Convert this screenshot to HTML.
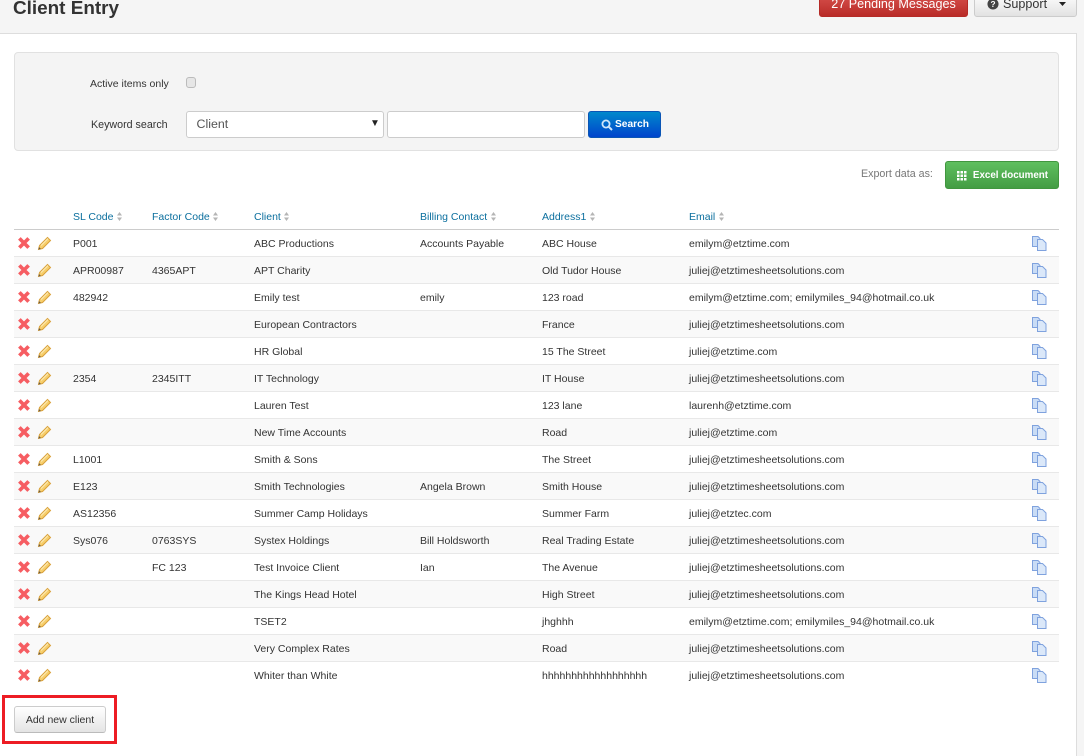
<!DOCTYPE html>
<html><head><meta charset="utf-8"><title>Client Entry</title>
<style>
html,body{margin:0;padding:0;width:1084px;height:755px;overflow:hidden;background:#f5f5f5;font-family:"Liberation Sans",Arial,sans-serif;color:#333}
.abs{position:absolute}
#main{position:absolute;left:0;top:33px;width:1076px;height:722px;background:#fff;border-top:1px solid #ddd;border-right:1px solid #ddd}
h1{position:absolute;left:13px;top:-4px;margin:0;font-size:18.9px;line-height:26px;font-weight:bold;color:#333}
.btn{position:absolute;box-sizing:border-box;border-radius:3px;text-align:center}
#pending{left:819px;top:-8px;width:149px;height:25px;background:linear-gradient(#d9534f,#b92c28);border:1px solid #b52b27;color:#fff;font-size:12.6px;line-height:23px}
#support{left:974px;top:-8px;width:103px;height:25px;background:linear-gradient(#fff,#e2e2e2);border:1px solid #ccc;color:#333;font-size:12.6px;line-height:23px;text-align:left;padding-left:28px}
#well{position:absolute;left:14px;top:52px;box-sizing:border-box;width:1045px;height:99px;background:#f4f4f4;border:1px solid #e1e1e1;border-radius:4px}
.lbl{position:absolute;font-size:10.5px;line-height:14px;color:#333;white-space:nowrap}
#sel{position:absolute;left:186px;top:111px;box-sizing:border-box;width:198px;height:27px;background:#fff;border:1px solid #ccc;border-radius:3px;font-size:12.4px;line-height:24px;color:#555;padding-left:9.5px}
#sel i{position:absolute;left:183px;top:0;font-style:normal;font-size:10px;color:#222}
#inp{position:absolute;left:387px;top:111px;box-sizing:border-box;width:198px;height:27px;background:#fff;border:1px solid #ccc;border-radius:3px}
#search{left:588px;top:111px;width:73px;height:27px;background:linear-gradient(#0088cc,#0044cc);border:1px solid #0a55b5;color:#fff;font-size:10.2px;font-weight:bold;line-height:26px;padding-left:15px}
#cb{position:absolute;left:186px;top:77px;box-sizing:border-box;width:10px;height:11px;border:1px solid #bbb;border-radius:3px;background:#e6e6e6}
#excel{left:945px;top:161px;width:114px;height:28px;background:linear-gradient(#5fbf5f,#449d44);border:1px solid #41963f;color:#fff;font-size:9.8px;font-weight:bold;line-height:27px;padding-left:17px}
table{position:absolute;left:14px;top:203px;width:1045px;border-collapse:collapse;table-layout:fixed;font-size:10.5px;color:#333}
th{height:24px;padding:2px 0 0;text-align:left;font-weight:normal;color:#0b6f9e;border-bottom:1px solid #ccc;white-space:nowrap;vertical-align:middle}
td{height:24px;padding:2px 0 0;border-bottom:1px solid #e8e8e8;white-space:nowrap;vertical-align:middle}
tr.o td{background:#f9f9f9}
th svg{margin-left:3.5px;vertical-align:-1px}
.ic{display:block;float:left;position:relative;top:-1px}
#add{left:14px;top:706px;width:92px;height:27px;background:linear-gradient(#fff,#e4e4e4);border:1px solid #ccc;border-bottom-color:#bbb;color:#333;font-size:10.5px;line-height:26px}
#red{position:absolute;left:2px;top:695px;box-sizing:border-box;width:115px;height:49px;border:3px solid #ed1c24}
</style></head><body>
<svg width="0" height="0" style="position:absolute"><defs>
<symbol id="x" viewBox="0 0 13 13"><path d="M2.2 2.2L10.8 10.8M10.8 2.2L2.2 10.8" stroke="#f65d62" stroke-width="3.4"/></symbol>
<symbol id="p" viewBox="0 0 15 15"><path d="M1.5 13.5L2.5 9.5L10.5 1.5L13.5 4.5L5.5 12.5Z" fill="#f7cf6d" stroke="#d9a13a" stroke-width="1"/><path d="M1.5 13.5L2 11L4 13Z" fill="#6a5a40"/><path d="M4 9.5L11 2.5" stroke="#fdeebc" stroke-width="1"/></symbol>
<symbol id="c" viewBox="0 0 15 15"><path d="M.5.5H6L8 2.5V10.5H.5Z" fill="#c9dcf5" stroke="#7fa2de"/><path d="M5.5 3.5H10.5L14 7V14.5H5.5Z" fill="#dbe8f9" stroke="#7fa2de"/></symbol>
<symbol id="s" viewBox="0 0 5 9"><path d="M2.5 0L5 3.5H0ZM0 5.5H5L2.5 9Z" fill="#b5b5b5"/></symbol>
</defs></svg>
<h1>Client Entry</h1>
<div class="btn" id="pending">27 Pending Messages</div>
<div class="btn" id="support">Support<svg class="abs" style="left:12px;top:5px" width="12" height="12" viewBox="0 0 13 13"><circle cx="6.5" cy="6.5" r="6" fill="#444"/><text x="6.5" y="10" font-size="9" font-weight="bold" text-anchor="middle" fill="#fff" font-family="Liberation Sans">?</text></svg><svg class="abs" style="left:84px;top:9px" width="8" height="4"><path d="M0 0H7L3.5 4Z" fill="#222"/></svg></div>
<div id="main"></div>
<div id="well"></div>
<div class="lbl" style="left:90px;top:77px">Active items only</div>
<div id="cb"></div>
<div class="lbl" style="left:91px;top:118px;font-size:10.7px">Keyword search</div>
<div id="sel">Client<i>&#9660;</i></div>
<div id="inp"></div>
<div class="btn" id="search"><svg class="abs" style="left:12px;top:7px" width="12" height="12" viewBox="0 0 12 12"><circle cx="5" cy="5" r="3.6" fill="none" stroke="#cfe6fa" stroke-width="1.8"/><path d="M7.8 7.8L11 11" stroke="#cfe6fa" stroke-width="2"/></svg>Search</div>
<div class="lbl" style="left:861px;top:167px;color:#777;font-size:10.7px">Export data as:</div>
<div class="btn" id="excel"><svg class="abs" style="left:11px;top:9px" width="10" height="10"><path d="M0 0h2.5v2.5H0zM3.5 0h2.5v2.5H3.5zM7 0h2.5v2.5H7zM0 3.5h2.5V6H0zM3.5 3.5h2.5V6H3.5zM7 3.5h2.5V6H7zM0 7h2.5v2.5H0zM3.5 7h2.5v2.5H3.5zM7 7h2.5v2.5H7z" fill="#fff"/></svg>Excel document</div>
<table>
<colgroup><col style="width:59px"><col style="width:79px"><col style="width:102px"><col style="width:166px"><col style="width:122px"><col style="width:147px"><col style="width:343px"><col style="width:27px"></colgroup>
<tr><th></th><th>SL Code<svg width="5" height="9"><use href="#s"/></svg></th><th>Factor Code<svg width="5" height="9"><use href="#s"/></svg></th><th>Client<svg width="5" height="9"><use href="#s"/></svg></th><th>Billing Contact<svg width="5" height="9"><use href="#s"/></svg></th><th>Address1<svg width="5" height="9"><use href="#s"/></svg></th><th>Email<svg width="5" height="9"><use href="#s"/></svg></th><th></th></tr>
<tr><td><svg class="ic" style="margin-left:3px" width="14" height="14"><use href="#x"/></svg><svg class="ic" style="margin-left:6px" width="15" height="15"><use href="#p"/></svg></td><td>P001</td><td></td><td>ABC Productions</td><td>Accounts Payable</td><td>ABC House</td><td>emilym@etztime.com</td><td><svg class="ic" width="15" height="15"><use href="#c"/></svg></td></tr>
<tr class="o"><td><svg class="ic" style="margin-left:3px" width="14" height="14"><use href="#x"/></svg><svg class="ic" style="margin-left:6px" width="15" height="15"><use href="#p"/></svg></td><td>APR00987</td><td>4365APT</td><td>APT Charity</td><td></td><td>Old Tudor House</td><td>juliej@etztimesheetsolutions.com</td><td><svg class="ic" width="15" height="15"><use href="#c"/></svg></td></tr>
<tr><td><svg class="ic" style="margin-left:3px" width="14" height="14"><use href="#x"/></svg><svg class="ic" style="margin-left:6px" width="15" height="15"><use href="#p"/></svg></td><td>482942</td><td></td><td>Emily test</td><td>emily</td><td>123 road</td><td>emilym@etztime.com; emilymiles_94@hotmail.co.uk</td><td><svg class="ic" width="15" height="15"><use href="#c"/></svg></td></tr>
<tr class="o"><td><svg class="ic" style="margin-left:3px" width="14" height="14"><use href="#x"/></svg><svg class="ic" style="margin-left:6px" width="15" height="15"><use href="#p"/></svg></td><td></td><td></td><td>European Contractors</td><td></td><td>France</td><td>juliej@etztimesheetsolutions.com</td><td><svg class="ic" width="15" height="15"><use href="#c"/></svg></td></tr>
<tr><td><svg class="ic" style="margin-left:3px" width="14" height="14"><use href="#x"/></svg><svg class="ic" style="margin-left:6px" width="15" height="15"><use href="#p"/></svg></td><td></td><td></td><td>HR Global</td><td></td><td>15 The Street</td><td>juliej@etztime.com</td><td><svg class="ic" width="15" height="15"><use href="#c"/></svg></td></tr>
<tr class="o"><td><svg class="ic" style="margin-left:3px" width="14" height="14"><use href="#x"/></svg><svg class="ic" style="margin-left:6px" width="15" height="15"><use href="#p"/></svg></td><td>2354</td><td>2345ITT</td><td>IT Technology</td><td></td><td>IT House</td><td>juliej@etztimesheetsolutions.com</td><td><svg class="ic" width="15" height="15"><use href="#c"/></svg></td></tr>
<tr><td><svg class="ic" style="margin-left:3px" width="14" height="14"><use href="#x"/></svg><svg class="ic" style="margin-left:6px" width="15" height="15"><use href="#p"/></svg></td><td></td><td></td><td>Lauren Test</td><td></td><td>123 lane</td><td>laurenh@etztime.com</td><td><svg class="ic" width="15" height="15"><use href="#c"/></svg></td></tr>
<tr class="o"><td><svg class="ic" style="margin-left:3px" width="14" height="14"><use href="#x"/></svg><svg class="ic" style="margin-left:6px" width="15" height="15"><use href="#p"/></svg></td><td></td><td></td><td>New Time Accounts</td><td></td><td>Road</td><td>juliej@etztime.com</td><td><svg class="ic" width="15" height="15"><use href="#c"/></svg></td></tr>
<tr><td><svg class="ic" style="margin-left:3px" width="14" height="14"><use href="#x"/></svg><svg class="ic" style="margin-left:6px" width="15" height="15"><use href="#p"/></svg></td><td>L1001</td><td></td><td>Smith &amp; Sons</td><td></td><td>The Street</td><td>juliej@etztimesheetsolutions.com</td><td><svg class="ic" width="15" height="15"><use href="#c"/></svg></td></tr>
<tr class="o"><td><svg class="ic" style="margin-left:3px" width="14" height="14"><use href="#x"/></svg><svg class="ic" style="margin-left:6px" width="15" height="15"><use href="#p"/></svg></td><td>E123</td><td></td><td>Smith Technologies</td><td>Angela Brown</td><td>Smith House</td><td>juliej@etztimesheetsolutions.com</td><td><svg class="ic" width="15" height="15"><use href="#c"/></svg></td></tr>
<tr><td><svg class="ic" style="margin-left:3px" width="14" height="14"><use href="#x"/></svg><svg class="ic" style="margin-left:6px" width="15" height="15"><use href="#p"/></svg></td><td>AS12356</td><td></td><td>Summer Camp Holidays</td><td></td><td>Summer Farm</td><td>juliej@etztec.com</td><td><svg class="ic" width="15" height="15"><use href="#c"/></svg></td></tr>
<tr class="o"><td><svg class="ic" style="margin-left:3px" width="14" height="14"><use href="#x"/></svg><svg class="ic" style="margin-left:6px" width="15" height="15"><use href="#p"/></svg></td><td>Sys076</td><td>0763SYS</td><td>Systex Holdings</td><td>Bill Holdsworth</td><td>Real Trading Estate</td><td>juliej@etztimesheetsolutions.com</td><td><svg class="ic" width="15" height="15"><use href="#c"/></svg></td></tr>
<tr><td><svg class="ic" style="margin-left:3px" width="14" height="14"><use href="#x"/></svg><svg class="ic" style="margin-left:6px" width="15" height="15"><use href="#p"/></svg></td><td></td><td>FC 123</td><td>Test Invoice Client</td><td>Ian</td><td>The Avenue</td><td>juliej@etztimesheetsolutions.com</td><td><svg class="ic" width="15" height="15"><use href="#c"/></svg></td></tr>
<tr class="o"><td><svg class="ic" style="margin-left:3px" width="14" height="14"><use href="#x"/></svg><svg class="ic" style="margin-left:6px" width="15" height="15"><use href="#p"/></svg></td><td></td><td></td><td>The Kings Head Hotel</td><td></td><td>High Street</td><td>juliej@etztimesheetsolutions.com</td><td><svg class="ic" width="15" height="15"><use href="#c"/></svg></td></tr>
<tr><td><svg class="ic" style="margin-left:3px" width="14" height="14"><use href="#x"/></svg><svg class="ic" style="margin-left:6px" width="15" height="15"><use href="#p"/></svg></td><td></td><td></td><td>TSET2</td><td></td><td>jhghhh</td><td>emilym@etztime.com; emilymiles_94@hotmail.co.uk</td><td><svg class="ic" width="15" height="15"><use href="#c"/></svg></td></tr>
<tr class="o"><td><svg class="ic" style="margin-left:3px" width="14" height="14"><use href="#x"/></svg><svg class="ic" style="margin-left:6px" width="15" height="15"><use href="#p"/></svg></td><td></td><td></td><td>Very Complex Rates</td><td></td><td>Road</td><td>juliej@etztimesheetsolutions.com</td><td><svg class="ic" width="15" height="15"><use href="#c"/></svg></td></tr>
<tr><td style="border-bottom:0"><svg class="ic" style="margin-left:3px" width="14" height="14"><use href="#x"/></svg><svg class="ic" style="margin-left:6px" width="15" height="15"><use href="#p"/></svg></td><td style="border-bottom:0"></td><td style="border-bottom:0"></td><td style="border-bottom:0">Whiter than White</td><td style="border-bottom:0"></td><td style="border-bottom:0">hhhhhhhhhhhhhhhhhh</td><td style="border-bottom:0">juliej@etztimesheetsolutions.com</td><td style="border-bottom:0"><svg class="ic" width="15" height="15"><use href="#c"/></svg></td></tr>
</table>
<div id="red"></div>
<div class="btn" id="add">Add new client</div>
</body></html>
